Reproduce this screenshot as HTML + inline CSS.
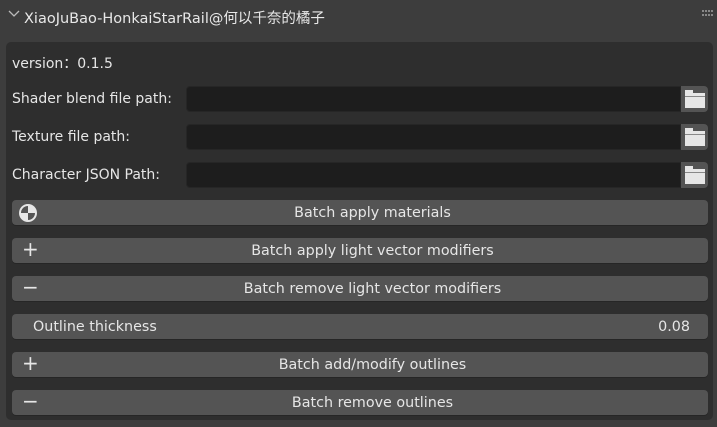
<!DOCTYPE html>
<html><head><meta charset="utf-8"><style>
*{margin:0;padding:0;box-sizing:border-box}
body{width:717px;height:427px;background:#3d3d3d;font-family:"DejaVu Sans","Noto Sans CJK SC",sans-serif;color:#e6e6e6;font-size:14px;position:relative;overflow:hidden}
.a{position:absolute}
.hdr{left:24px;top:7px;font-size:14.5px;color:#e8e8e8}
.panel{left:6px;top:42px;width:707px;height:378px;background:#2e2e2e;border-radius:5px}
.lbl{left:12px;font-size:14px}
.field{left:186px;width:495px;height:26px;background:#1d1d1d;border-radius:4px 0 0 4px;border:1px solid #262626}
.fold{left:681px;width:27px;height:26px;background:#545454;border-radius:0 4px 4px 0}
.btn{left:12px;width:696px;height:25px;background:#545454;border-radius:4px;text-align:center;line-height:27px;font-size:14.3px;box-shadow:0 1px 0 #262626;padding-left:25px}
.ic{position:absolute;left:10px;top:-1px;font-size:20px;line-height:25px;color:#e6e6e6}
</style></head><body>
<svg class="a" style="left:8px;top:9px" width="12" height="10"><path d="M1 2 L6 7 L11 2" stroke="#bbb" stroke-width="1.3" fill="none"/></svg>
<div class="a hdr">XiaoJuBao-HonkaiStarRail@何以千奈的橘子</div>
<svg class="a" style="left:702px;top:10px" width="12" height="8"><g fill="#888"><rect x="0" y="0" width="2" height="2"/><rect x="3" y="0" width="2" height="2"/><rect x="6" y="0" width="2" height="2"/><rect x="9" y="0" width="2" height="2"/><rect x="0" y="4" width="2" height="2"/><rect x="3" y="4" width="2" height="2"/><rect x="6" y="4" width="2" height="2"/><rect x="9" y="4" width="2" height="2"/></g></svg>
<div class="a panel"></div>
<div class="a lbl" style="top:53px">version：0.1.5</div>
<div class="a lbl" style="top:91px">Shader blend file path:</div>
<div class="a field" style="top:86px"></div><div class="a fold" style="top:86px"><svg class="a" style="left:4px;top:4px" width="20" height="18"><rect x="0" y="0" width="8" height="4" fill="#e6e6e6"/><rect x="0" y="3" width="20" height="15" fill="#e6e6e6"/><rect x="0" y="6" width="20" height="1" fill="#888"/></svg></div>
<div class="a lbl" style="top:129px">Texture file path:</div>
<div class="a field" style="top:124px"></div><div class="a fold" style="top:124px"><svg class="a" style="left:4px;top:4px" width="20" height="18"><rect x="0" y="0" width="8" height="4" fill="#e6e6e6"/><rect x="0" y="3" width="20" height="15" fill="#e6e6e6"/><rect x="0" y="6" width="20" height="1" fill="#888"/></svg></div>
<div class="a lbl" style="top:167px">Character JSON Path:</div>
<div class="a field" style="top:162px"></div><div class="a fold" style="top:162px"><svg class="a" style="left:4px;top:4px" width="20" height="18"><rect x="0" y="0" width="8" height="4" fill="#e6e6e6"/><rect x="0" y="3" width="20" height="15" fill="#e6e6e6"/><rect x="0" y="6" width="20" height="1" fill="#888"/></svg></div>
<div class="a btn" style="top:200px"><svg class="a" style="left:6px;top:3px" width="20" height="20"><circle cx="10" cy="10" r="9" fill="#e6e6e6"/><path d="M10 3 A7 7 0 0 0 3 10 L10 10Z" fill="#545454"/><path d="M10 10 L17 10 A7 7 0 0 1 10 17Z" fill="#545454"/></svg>Batch apply materials</div>
<div class="a btn" style="top:238px"><span class="ic">+</span>Batch apply light vector modifiers</div>
<div class="a btn" style="top:276px"><span class="ic">−</span>Batch remove light vector modifiers</div>
<div class="a btn" style="top:314px;text-align:left;padding-left:21px">Outline thickness<span style="position:absolute;right:18px">0.08</span></div>
<div class="a btn" style="top:352px"><span class="ic">+</span>Batch add/modify outlines</div>
<div class="a btn" style="top:390px"><span class="ic">−</span>Batch remove outlines</div>
</body></html>
